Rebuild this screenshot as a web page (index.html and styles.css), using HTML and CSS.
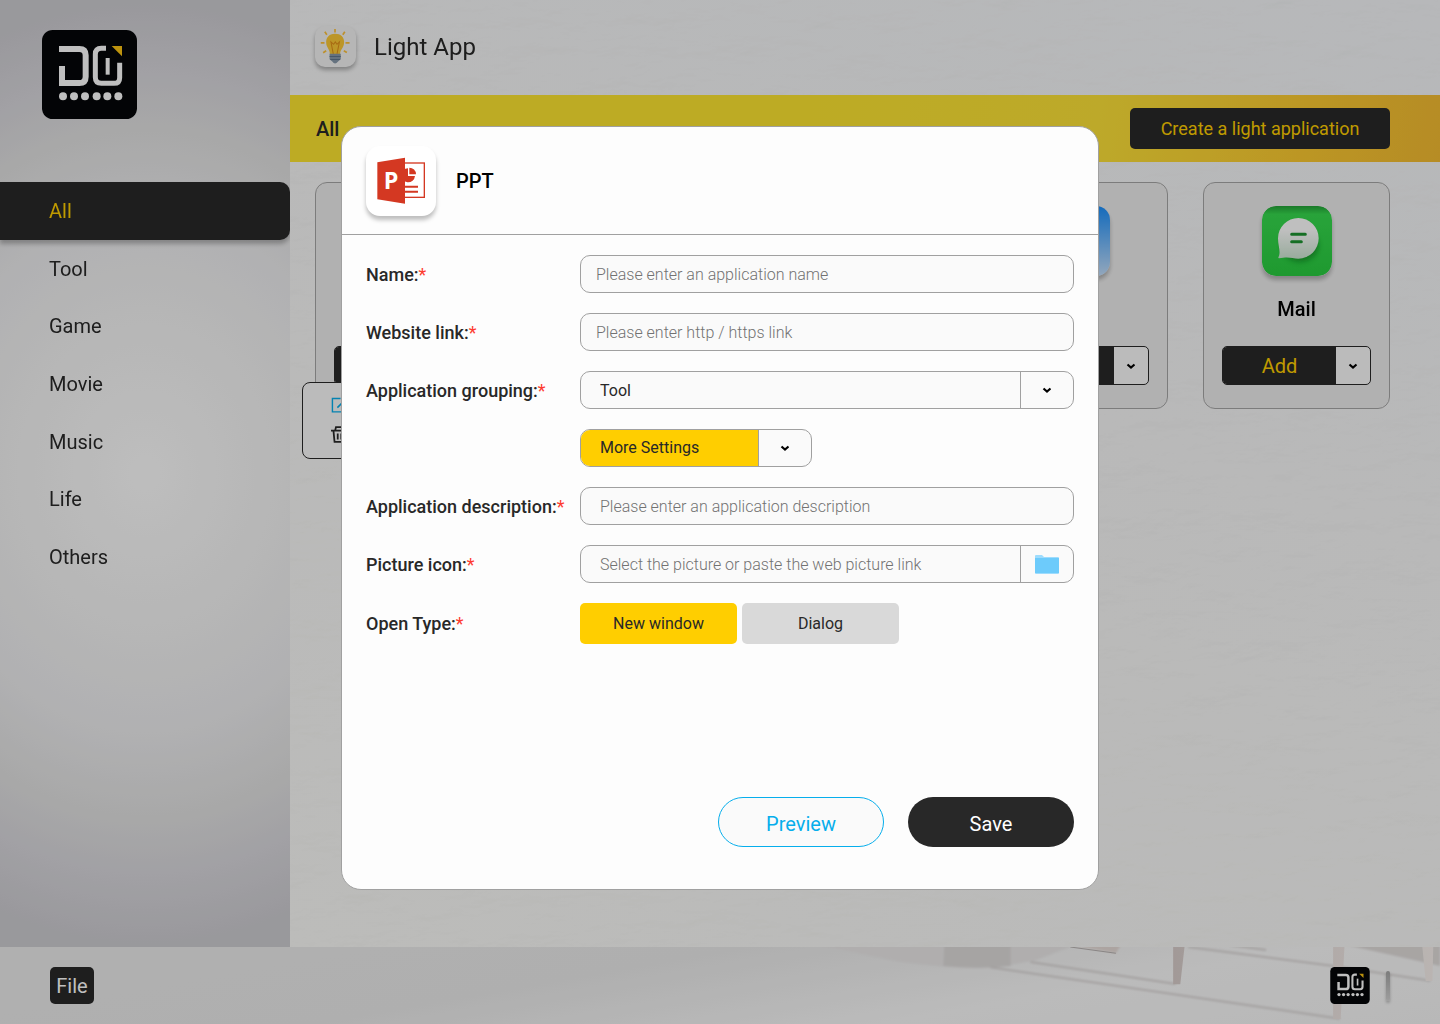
FILE: index.html
```html
<!DOCTYPE html>
<html lang="en">
<head>
<meta charset="utf-8">
<title>Light App</title>
<meta name="viewport" content="width=device-width, initial-scale=1">
<link rel="stylesheet" href="styles.css">
</head>
<body>
<svg class="defs" aria-hidden="true">
  <symbol id="logo" viewBox="0 0 285 267">
    <rect width="285" height="267" rx="32" fill="#040608"/>
    <path d="M51 57H112Q131 57 131 76V140Q131 159 112 159H60V108" fill="none" stroke="#fff" stroke-width="18"/>
    <path d="M192 55H178Q160 55 160 73V142Q160 160 178 160H216Q233 160 233 143V98" fill="none" stroke="#fff" stroke-width="15"/>
    <path d="M197 84V134" stroke="#fff" stroke-width="12"/>
    <path d="M209 48H240V79Z" fill="#fdc513"/>
    <g fill="#fff"><circle cx="63" cy="199" r="12"/><circle cx="96" cy="199" r="12"/><circle cx="129" cy="199" r="12"/><circle cx="164" cy="199" r="12"/><circle cx="196" cy="199" r="12"/><circle cx="229" cy="199" r="12"/></g>
  </symbol>
  <symbol id="chevron" viewBox="0 0 10 8">
    <path d="M1.500 2.500L5 5.500L8.500 2.500" fill="none" stroke="currentColor" stroke-width="2.200"/>
  </symbol>
</svg>

<div class="page">
  <div class="workspace">
    <aside class="sidebar">
      <svg class="brand" role="img" aria-label="DG"><use href="#logo"/></svg>
      <nav class="nav">
        <a class="nav-link active" href="#all">All</a>
        <a class="nav-link" href="#tool">Tool</a>
        <a class="nav-link" href="#game">Game</a>
        <a class="nav-link" href="#movie">Movie</a>
        <a class="nav-link" href="#music">Music</a>
        <a class="nav-link" href="#life">Life</a>
        <a class="nav-link" href="#others">Others</a>
      </nav>
    </aside>

    <main class="content">
      <svg class="plaster" aria-hidden="true">
        <filter id="plaster-light" x="0" y="0" width="100%" height="100%">
          <feTurbulence type="fractalNoise" baseFrequency="0.015 0.04" numOctaves="6" seed="21"/>
          <feDiffuseLighting surfaceScale="1.500" diffuseConstant="1.130" lighting-color="#fff"><feDistantLight azimuth="240" elevation="62"/></feDiffuseLighting>
        </filter>
        <rect width="100%" height="100%" filter="url(#plaster-light)"/>
      </svg>
      <header class="app-header">
        <svg class="bulb" viewBox="75 78 121 121" aria-hidden="true">
          <g stroke="#fcc13b" stroke-width="5"><path d="M134 87V97M104 95L110 104M163 95L157 104M92 128H103M165 128H177M99 157L108 151M160 151L169 156"/></g>
          <path d="M134 101C116 101 107 113 108 128C109 142 119 147 119 161H149C149 147 161 142 161 126C161 111 151 101 134 101Z" fill="#fbc836"/>
          <path d="M129 160L122 125L130 132L135 125L140 132L147 125L140 160" fill="none" stroke="#e08f19" stroke-width="3"/>
          <path d="M118 160H151V176L143 183Q134 194 126 183L118 176Z" fill="#8799aa"/>
          <path d="M118 168H151M120 177H149" stroke="#61768d" stroke-width="3"/>
        </svg>
        <h1>Light App</h1>
      </header>
      <div class="toolbar">
        <h2>All</h2>
        <button class="create" type="button">Create a light application</button>
      </div>
      <div class="cards">
        <article class="card">
          <div class="split"><button class="split-main" type="button" aria-label="Add"></button><button class="split-more" type="button" aria-label="More"></button></div>
          <div class="card-menu">
            <button class="menu-item edit" type="button" aria-label="Edit">
              <svg viewBox="0 0 48 48" aria-hidden="true"><path d="M27 4H4V42H42V22M18 30L42 6" fill="none" stroke="currentColor" stroke-width="4"/></svg>
            </button>
            <button class="menu-item" type="button" aria-label="Delete">
              <svg viewBox="0 0 48 48" aria-hidden="true"><path d="M0 13H48M12 12L14 3H34L36 12M7 14L10 45H38L41 14M19 21V38M29 21V38" fill="none" stroke="currentColor" stroke-width="5"/></svg>
            </button>
          </div>
        </article>
        <article class="card fourth">
          <span class="app-icon sky"></span>
          <div class="split"><button class="split-main" type="button" aria-label="Add"></button><button class="split-more" type="button" aria-label="More"><svg class="chevron"><use href="#chevron"/></svg></button></div>
        </article>
        <article class="card">
          <svg class="app-icon" viewBox="0 0 210 210" aria-hidden="true">
            <defs>
              <linearGradient id="green" x2="0" y2="1"><stop offset="0" stop-color="#24a338"/><stop offset=".12" stop-color="#36da4e"/><stop offset="1" stop-color="#29cd40"/></linearGradient>
              <linearGradient id="bubble" x2="0" y2="1"><stop offset=".3" stop-color="#fff"/><stop offset="1" stop-color="#cce5d1"/></linearGradient>
              <filter id="soft" x="-30%" y="-30%" width="160%" height="160%"><feGaussianBlur stdDeviation="8"/></filter>
            </defs>
            <rect width="210" height="210" rx="42" fill="url(#green)"/>
            <ellipse cx="114" cy="118" rx="56" ry="50" fill="#08751b" opacity=".55" filter="url(#soft)"/>
            <path d="M109 36A61 61 0 1 1 109 158C90 157 80 151 51 157Q47 156 51 150C56 135 48 119 48 97A61 61 0 0 1 109 36Z" fill="url(#bubble)"/>
            <path d="M89 85H130M89 107H118" stroke="#1c9530" stroke-width="9" stroke-linecap="round"/>
          </svg>
          <h3>Mail</h3>
          <div class="split"><button class="split-main" type="button">Add</button><button class="split-more" type="button" aria-label="More"><svg class="chevron"><use href="#chevron"/></svg></button></div>
        </article>
      </div>
    </main>
  </div>

  <footer class="dock">
    <svg class="room" viewBox="0 51 1568 231" preserveAspectRatio="none" aria-hidden="true">
      <defs>
        <filter id="haze"><feGaussianBlur stdDeviation="3"/></filter>
        <linearGradient id="leg" x2="1"><stop offset="0" stop-color="#d8cdca"/><stop offset=".35" stop-color="#e6dcd9"/><stop offset="1" stop-color="#f8f1ee"/></linearGradient>
      </defs>
      <g filter="url(#haze)">
        <path d="M90 45H700L610 90L520 112Q400 118 280 95Z" fill="#ebe9e9"/>
        <path d="M390 45H548V108Q470 118 388 108Z" fill="#dedbda"/>
        <path d="M1345 45L1535 98L1568 108V45Z" fill="#e0dcda"/>
        <path d="M500 112L1330 266M595 96L940 162M970 51L1320 109L1545 152M1070 45L1155 60" fill="none" stroke="#dad6d5" stroke-width="6"/>
        <path d="M690 45H810L798 70Z" fill="#e6dbd7"/>
      </g>
      <path d="M690 51L798 70" stroke="#b8b3b2" stroke-width="3"/>
      <path d="M934 51H961L951 163H934ZM1314 51H1341L1332 267H1314ZM1526 51H1552L1550 153H1534Z" fill="url(#leg)"/>
    </svg>
    <button class="file" type="button">File</button>
    <div class="dock-end">
      <svg class="dock-logo" role="img" aria-label="DG"><use href="#logo"/></svg>
      <span class="handle"></span>
    </div>
  </footer>
</div>

<div class="backdrop">
  <section class="dialog" role="dialog" aria-labelledby="dialog-title">
    <header class="dialog-header">
      <svg class="ppt" viewBox="228 436 210 210" aria-hidden="true">
        <rect x="340" y="487" width="63" height="103" fill="#fff" stroke="#d43822" stroke-width="4"/>
        <path d="M354 503A21 21 0 1 0 375 526H354Z" fill="#d43822"/>
        <path d="M358 501A20 20 0 0 1 378 521H358Z" fill="#d43822"/>
        <path d="M345 558H384M345 573H384" stroke="#d43822" stroke-width="6"/>
        <path d="M262 485L345 471V609L262 596Z" fill="#d43822"/>
        <text class="ppt-letter" x="281" y="564">P</text>
      </svg>
      <h2 id="dialog-title">PPT</h2>
    </header>
    <form class="form">
      <div class="row">
        <label for="name">Name:<b>*</b></label>
        <input class="field" id="name" type="text" placeholder="Please enter an application name">
      </div>
      <div class="row">
        <label for="link">Website link:<b>*</b></label>
        <input class="field" id="link" type="text" placeholder="Please enter http / https link">
      </div>
      <div class="row">
        <label for="group">Application grouping:<b>*</b></label>
        <div class="combo">
          <select id="group"><option>Tool</option></select>
          <span class="combo-end"><svg class="chevron"><use href="#chevron"/></svg></span>
        </div>
      </div>
      <div class="row">
        <button class="combo more" type="button">
          <span class="more-text">More Settings</span>
          <span class="combo-end"><svg class="chevron"><use href="#chevron"/></svg></span>
        </button>
      </div>
      <div class="row">
        <label for="about">Application description:<b>*</b></label>
        <input class="field indent" id="about" type="text" placeholder="Please enter an application description">
      </div>
      <div class="row">
        <label for="picture">Picture icon:<b>*</b></label>
        <div class="combo">
          <input id="picture" type="text" placeholder="Select the picture or paste the web picture link">
          <button class="combo-end" type="button" aria-label="Browse">
            <svg class="folder" viewBox="0 0 24 19" aria-hidden="true"><path d="M0 1Q0 0 1 0H7L9 2H23Q24 2 24 3V18Q24 19 23 19H1Q0 19 0 18Z" fill="#9edcfd"/><path d="M0 3H24V18H0Z" fill="#6dcbfb"/></svg>
          </button>
        </div>
      </div>
      <div class="row">
        <span class="label" id="open-type">Open Type:<b>*</b></span>
        <div class="choices" role="group" aria-labelledby="open-type">
          <button class="choice chosen" type="button" aria-pressed="true">New window</button>
          <button class="choice" type="button" aria-pressed="false">Dialog</button>
        </div>
      </div>
      <div class="actions">
        <button class="action preview" type="button">Preview</button>
        <button class="action save" type="submit">Save</button>
      </div>
    </form>
  </section>
</div>
</body>
</html>
```
FILE: styles.css
```css
* { box-sizing: border-box; }

body {
  margin: 0;
  font-family: Roboto, "Liberation Sans", sans-serif;
  color: #282828;
}

h1, h2, h3 { margin: 0; font-weight: 500; }

button, input, select {
  font: inherit;
  color: inherit;
  border: 0;
  padding: 0;
  margin: 0;
  background: none;
}

button { cursor: pointer; }
.defs { position: absolute; width: 0; height: 0; }
.chevron { display: block; width: 10px; height: 8px; color: #000; }

.page { display: flex; flex-direction: column; min-height: 100vh; }
.workspace { display: flex; flex: 1; }

/* Sidebar */
.sidebar {
  flex: 0 0 290px;
  padding-top: 30px;
  background: radial-gradient(ellipse 400px 470px at 50% 50%, #fdfdfd 0%, #f3f3f3 35%, #ececee 55%, #e1e1e1 73%, #d8d7dc 85%, #cdccd1 100%);
}
.brand { display: block; width: 95px; height: 89px; margin-left: 42px; }
.nav { display: flex; flex-direction: column; height: 404px; margin-top: 63px; }
.nav-link {
  flex: 1;
  display: flex;
  align-items: center;
  padding-left: 49px;
  font-size: 20px;
  color: inherit;
  text-decoration: none;
}
.nav-link.active {
  color: #ffce00;
  background: #282828;
  border-radius: 0 10px 10px 0;
  box-shadow: 0 4px 4px rgba(0, 0, 0, .25);
}

/* Main area */
.content {
  position: relative;
  flex: 1;
  min-width: 0;
  background: linear-gradient(200deg, #f4f6f8, #f7f7f7 40%, #fbfbf8);
}
.plaster {
  position: absolute;
  inset: 0;
  width: 100%;
  height: 100%;
  opacity: .25;
  mix-blend-mode: multiply;
}
.app-header, .toolbar, .cards { position: relative; }
.app-header { display: flex; align-items: center; gap: 18px; height: 95px; padding: 0 25px 2px; }
.app-header h1 { font-size: 24px; font-weight: 400; }
.bulb {
  width: 41px;
  height: 41px;
  border-radius: 10px;
  background: #f3f3f3;
  box-shadow: 0 3px 4px rgba(0, 0, 0, .3);
}
.toolbar {
  display: flex;
  align-items: center;
  justify-content: space-between;
  height: 67px;
  padding: 0 50px 0 26px;
  background: linear-gradient(100deg, #fce531 45%, #fde238 70%, #fbc931 88%, #f3bb32);
}
.toolbar h2 { font-size: 20px; }
.create {
  width: 260px;
  height: 41px;
  border-radius: 5px;
  font-size: 18px;
  color: #ffce00;
  background: #282828;
}
.cards {
  display: grid;
  grid-template-columns: repeat(5, 1fr);
  gap: 35px;
  padding: 20px 50px 0 25px;
}
.card {
  position: relative;
  display: flex;
  flex-direction: column;
  align-items: center;
  height: 227px;
  padding: 23px 18px;
  border: 1px solid #a6a6a6;
  border-radius: 12px;
  background: #ededed;
}
.fourth { grid-column: 4; }
.app-icon {
  width: 70px;
  height: 70px;
  border-radius: 14px;
  box-shadow: 0 4px 4px rgba(0, 0, 0, .25);
}
.sky { background: linear-gradient(#1b8ffb, #c4dffb); }
.card h3 { margin-top: 21px; font-size: 20px; line-height: 24px; color: #000; }
.split {
  display: flex;
  width: 100%;
  height: 39px;
  margin-top: auto;
  border: 1px solid #282828;
  border-radius: 5px;
  background: #fafafa;
  overflow: hidden;
}
.split-main { flex: 1; font-size: 20px; line-height: 36px; color: #ffce00; background: #282828; }
.split-more { display: grid; place-items: center; width: 34px; }
.card-menu {
  position: absolute;
  top: 199px;
  left: -14px;
  display: flex;
  flex-direction: column;
  gap: 12px;
  width: 150px;
  height: 77px;
  padding: 14px 28px;
  border: 1px solid #282828;
  border-radius: 8px;
  background: #fafafa;
}
.menu-item { width: 17px; height: 17px; }
.menu-item svg { display: block; width: 17px; height: 17px; }
.edit { color: #06aeec; }

/* Bottom dock */
.dock {
  position: relative;
  display: flex;
  align-items: center;
  justify-content: space-between;
  height: 77px;
  padding: 0 50px;
  background: linear-gradient(170deg, #ebebeb 20%, #eaeaea 40%, #fafafa 70%, #f6f6f6);
}
.room { position: absolute; right: 0; top: 0; width: 660px; height: 77px; }
.file {
  position: relative;
  width: 44px;
  height: 37px;
  border-radius: 5px;
  font-size: 20px;
  line-height: 36px;
  color: #fff;
  background: #282828;
}
.dock-end { position: relative; display: flex; align-items: center; gap: 16px; }
.dock-logo { width: 40px; height: 37px; }
.handle {
  width: 4px;
  height: 30px;
  border-radius: 2px;
  background: linear-gradient(#a5a5a5, #d2d2d2);
  box-shadow: 0 2px 3px rgba(0, 0, 0, .25);
}

/* Dialog */
.backdrop {
  position: fixed;
  inset: 0;
  display: flex;
  align-items: center;
  justify-content: center;
  padding-bottom: 8px;
  background: rgba(0, 0, 0, .25);
}
.dialog {
  width: 758px;
  max-width: 100%;
  border: 1px solid #a0a0a0;
  border-radius: 20px;
  background: #fdfdfd;
}
.dialog-header {
  display: flex;
  align-items: center;
  gap: 20px;
  height: 108px;
  padding: 0 24px;
  border-bottom: 1px solid #a0a0a0;
}
.dialog-header h2 { font-size: 20px; color: #000; }
.ppt {
  width: 70px;
  height: 70px;
  border-radius: 14px;
  background: #fff;
  box-shadow: 0 4px 4px rgba(0, 0, 0, .25);
}
.ppt-letter { font: 700 70px "Open Sans", sans-serif; fill: #fff; }

.form { display: flex; flex-direction: column; gap: 20px; padding: 20px 24px 42px; }
.row {
  display: grid;
  grid-template-columns: 214px 1fr;
  align-items: center;
  height: 38px;
}
label, .label { font-size: 18px; font-weight: 500; }
label b, .label b { font-weight: 400; color: #fd3b30; }

.field, .combo {
  width: 100%;
  height: 38px;
  border: 1px solid #a0a0a0;
  border-radius: 10px;
  font-size: 16px;
  background: #fafafa;
}
.field { padding: 0 15px; }
.indent { padding-left: 19px; }
::placeholder { color: #727272; font-weight: 300; opacity: 1; }

.combo { display: flex; overflow: hidden; }
.combo select, .combo input { flex: 1; min-width: 0; padding-left: 19px; appearance: none; }
.combo-end {
  display: grid;
  place-items: center;
  flex: 0 0 53px;
  border-left: 1px solid #a0a0a0;
}
.more { grid-column: 2; width: 232px; text-align: left; }
.more-text { flex: 1; padding-left: 19px; line-height: 36px; background: #ffce00; }
.folder { display: block; width: 24px; height: 19px; }

.choices { display: flex; gap: 5px; }
.choice {
  width: 157px;
  height: 41px;
  border-radius: 5px;
  font-size: 16px;
  background: #d9d9d9;
}
.chosen { background: #ffce00; }

.actions { display: flex; justify-content: flex-end; gap: 24px; padding-top: 136px; }
.action {
  width: 166px;
  height: 50px;
  padding-top: 4px;
  border-radius: 25px;
  font-size: 20px;
}
.preview { border: 1px solid #06aeec; color: #06aeec; background: #fafafa; }
.save { color: #fff; background: #282828; }
```
